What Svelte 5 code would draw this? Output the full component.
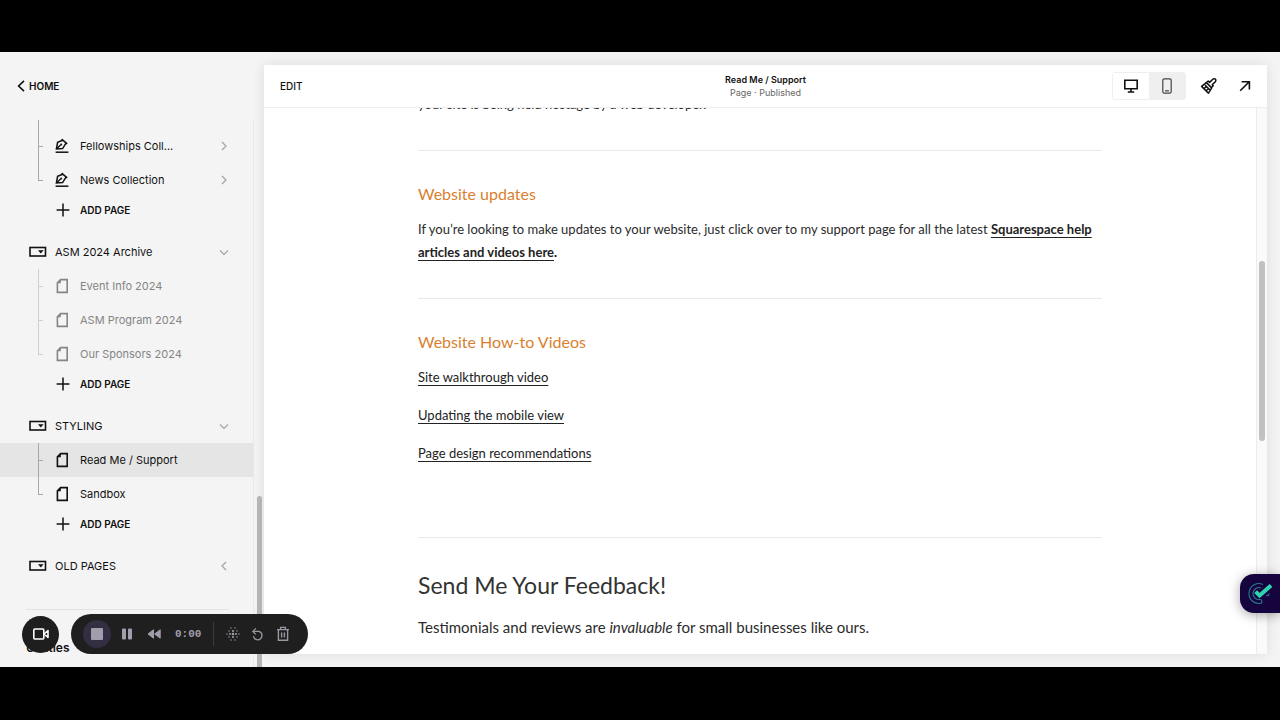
<script>
  let device = $state('desktop');
  let selected = $state('Read Me / Support');

  const groups = [
    {
      title: null,
      icon: 'pen',
      pages: ['Fellowships Coll...', 'News Collection']
    },
    {
      title: 'ASM 2024 Archive',
      icon: 'page',
      muted: true,
      pages: ['Event Info 2024', 'ASM Program 2024', 'Our Sponsors 2024']
    },
    {
      title: 'STYLING',
      icon: 'page',
      pages: ['Read Me / Support', 'Sandbox']
    }
  ];

  const videos = ['Site walkthrough video', 'Updating the mobile view', 'Page design recommendations'];

  // dot grid for the effects icon: [x, y, r]
  const dots = [
    [5, 1, 0.7], [9, 1, 0.7],
    [3, 4, 0.7], [7, 4, 1.1], [11, 4, 0.7],
    [1, 7, 0.7], [4, 7, 1], [7, 7, 1.3], [10, 7, 1], [13, 7, 0.7],
    [3, 10, 0.7], [7, 10, 1.1], [11, 10, 0.7],
    [5, 13, 0.7], [9, 13, 0.7]
  ];
</script>

{#snippet folderIcon()}
  <svg class="folder-icon" width="18" height="12" viewBox="0 0 18 12" aria-hidden="true">
    <rect x="1" y="1.5" width="15.5" height="8.5" fill="none" stroke="#111" stroke-width="1.6" />
    <path d="M9 4.3h5.6L11.8 7.6z" fill="#111" />
  </svg>
{/snippet}

{#snippet chevron(dir)}
  <svg class="chevron" width="12" height="12" viewBox="0 0 12 12" fill="none" stroke="#a3a3a3" stroke-width="1.2" aria-hidden="true">
    {#if dir === 'right'}
      <path d="M4 2l4 4-4 4" />
    {:else if dir === 'down'}
      <path d="M2 4.5l4 4 4-4" />
    {:else}
      <path d="M8 2L4 6l4 4" />
    {/if}
  </svg>
{/snippet}

<div class="stage">
  <div class="workspace">
    <aside class="sidebar">
      <a class="home" href="#home">
        <svg width="8" height="12" viewBox="0 0 8 12" fill="none" stroke="#111" stroke-width="1.6" aria-hidden="true">
          <path d="M7 .8L1.6 6 7 11.2" />
        </svg>
        HOME
      </a>

      <nav class="pages">
        {#each groups as group}
          {#if group.title}
            <button class="section">
              {@render folderIcon()}
              <span>{group.title}</span>
              {@render chevron('down')}
            </button>
          {/if}
          <ul class:light={group.muted} class:continued={!group.title}>
            {#each group.pages as page}
              <li>
                <button class="row" class:active={selected === page} onclick={() => (selected = page)}>
                  {#if group.icon === 'pen'}
                    <svg width="14" height="16" viewBox="0 0 14 16" fill="none" stroke="#111" stroke-width="1.5" aria-hidden="true">
                      <path d="M6.6 1.2l5.6 4.6M7.6 2.2L2.6 4.4 1.4 11 7.6 10.6 11 5.2" />
                      <path d="M1.6 10.8l4-3.8" />
                      <circle cx="6.2" cy="6.4" r="1" fill="#111" stroke="none" />
                      <path d="M.6 14.2h12.8" />
                    </svg>
                  {:else}
                    <svg width="14" height="16" viewBox="0 0 14 16" fill="none" stroke="currentColor" stroke-width="1.6" aria-hidden="true">
                      <path d="M5.6 1.6h6.6v12.8H2.4V4.9z" />
                      <path d="M5.8 1.6v3.6H2.4z" fill="currentColor" stroke="none" />
                    </svg>
                  {/if}
                  <span>{page}</span>
                  {#if group.icon === 'pen'}{@render chevron('right')}{/if}
                </button>
              </li>
            {/each}
          </ul>
          <button class="add">
            <svg width="14" height="14" viewBox="0 0 14 14" stroke="#111" stroke-width="1.5" aria-hidden="true">
              <path d="M7 .6v12.8M.6 7h12.8" />
            </svg>
            ADD PAGE
          </button>
        {/each}
        <button class="section">
          {@render folderIcon()}
          <span>OLD PAGES</span>
          {@render chevron('left')}
        </button>
        <h2 class="utilities">Utilities</h2>
      </nav>
      <div class="side-thumb"></div>
    </aside>

    <main class="preview">
      <header class="toolbar">
        <button class="edit">EDIT</button>
        <div class="title">
          <strong>Read Me / Support</strong>
          <span>Page · Published</span>
        </div>
        <div class="tools">
          <div class="devices">
            <button class:on={device === 'desktop'} aria-label="Desktop view" onclick={() => (device = 'desktop')}>
              <svg width="16" height="16" viewBox="0 0 16 16" fill="none" stroke="#111" stroke-width="1.6" aria-hidden="true">
                <path d="M1.8 2.3h12.4v8.4H1.8zM8 10.7V14M4.8 14h6.4" />
              </svg>
            </button>
            <button class:on={device === 'mobile'} aria-label="Mobile view" onclick={() => (device = 'mobile')}>
              <svg width="16" height="16" viewBox="0 0 16 16" fill="none" stroke="#444" stroke-width="1.2" aria-hidden="true">
                <rect x="3.8" y=".8" width="8.4" height="14.4" rx="1.5" />
                <path d="M6 12.8h4" />
              </svg>
            </button>
          </div>
          <button class="tool" aria-label="Site styles">
            <svg width="18" height="18" viewBox="0 0 18 18" fill="none" stroke="#111" stroke-width="1.5" stroke-linejoin="round" aria-hidden="true">
              <path d="M9.6 5.4l3.2-3.2a1.7 1.7 0 0 1 2.6 2.4l-3.2 3.2 1 1-1.8 1.8-5-5 1.8-1.6z" />
              <path d="M6.4 5.6L1.6 9.4l6.8 6.8 3.4-5.4" />
              <path d="M3.8 11.6l2.6-2M6 13.8l2.6-2.2M5 8l5 5" />
            </svg>
          </button>
          <button class="tool" aria-label="Open site">
            <svg width="12" height="12" viewBox="0 0 12 12" fill="none" stroke="#111" stroke-width="1.6" aria-hidden="true">
              <path d="M1.2 10.8l9-9M2.6 1.8h7.8v7.6" />
            </svg>
          </button>
        </div>
      </header>

      <div class="page-view">
        <article>
          <p>your site is being held hostage by a web developer.</p>
          <hr />
          <h3>Website updates</h3>
          <p>
            If you’re looking to make updates to your website, just click over to my support page for all the latest
            <b><a href="#help">Squarespace help articles and videos here</a>.</b>
          </p>
          <hr />
          <h3>Website How-to Videos</h3>
          <ul class="videos">
            {#each videos as video}
              <li><a href="#video">{video}</a></li>
            {/each}
          </ul>
          <hr />
          <h2>Send Me Your Feedback!</h2>
          <p class="large">Testimonials and reviews are <em>invaluable</em> for small businesses like ours.</p>
        </article>
        <div class="scroll-track"><div class="page-thumb"></div></div>
      </div>
    </main>

    <div class="recorder">
      <button class="camera" aria-label="Camera">
        <svg width="18" height="14" viewBox="0 0 18 14" fill="none" stroke="#fff" stroke-width="1.6" stroke-linejoin="round" aria-hidden="true">
          <rect x="1.8" y="2" width="10" height="10" rx="1" />
          <path d="M12 7l4-3.4v6.8z" />
        </svg>
      </button>
      <div class="controls">
        <div class="playback">
          <button class="stop" aria-label="Stop"><i></i></button>
          <button aria-label="Pause">
            <svg width="12" height="12" viewBox="0 0 12 12" fill="#a29dac" aria-hidden="true">
              <rect x="1" y=".5" width="4" height="11" rx="1" />
              <rect x="7" y=".5" width="4" height="11" rx="1" />
            </svg>
          </button>
          <button aria-label="Rewind">
            <svg width="14" height="10" viewBox="0 0 14 10" fill="#a29dac" stroke="#a29dac" stroke-linejoin="round" aria-hidden="true">
              <path d="M6.5.8v8.4L1 5zM13.2.8v8.4L7.6 5z" />
            </svg>
          </button>
          <time>0:00</time>
        </div>
        <span class="divider"></span>
        <div class="extras">
          <button aria-label="Effects">
            <svg width="14" height="14" viewBox="0 0 14 14" fill="#a29dac" aria-hidden="true">
              {#each dots as [x, y, r]}
                <circle cx={x} cy={y} {r} />
              {/each}
            </svg>
          </button>
          <button aria-label="Restart">
            <svg width="14" height="14" viewBox="0 0 14 14" fill="none" stroke="#9a96a2" stroke-width="1.3" aria-hidden="true">
              <path d="M2.4 4.4H8a4.3 4.3 0 1 1-5.6 4.8" />
              <path d="M4.8 1.4l-3 3 3 3" />
            </svg>
          </button>
          <button aria-label="Delete">
            <svg width="14" height="16" viewBox="0 0 14 16" fill="none" stroke="#9a96a2" stroke-width="1.4" aria-hidden="true">
              <path d="M1 3.6h12M4.6 3.4V1.4h4.8v2M2.4 3.8v10.4h9.2V3.8M5.6 6.6v4.8M8.4 6.6v4.8" />
            </svg>
          </button>
        </div>
      </div>
    </div>

    <button class="assistant" aria-label="Assistant">
      <svg width="28" height="26" viewBox="0 0 28 26" fill="none" aria-hidden="true">
        <path d="M17 3.4A10 10 0 1 0 14 22.5a2 2 0 0 0-.3-4A6 6 0 1 1 15 6.9" stroke="#2a7890" stroke-width="1.1" />
        <path d="M20 14.5a2 2 0 0 0 3-2" stroke="#2a7890" stroke-width="1.1" />
        <path d="M9.6 10.6l4 4L25 4.4" stroke="#2fd3b0" stroke-width="4" />
      </svg>
    </button>
  </div>
</div>

<style>
  :global(body) {
    margin: 0;
    background: #000;
  }

  .stage {
    box-sizing: border-box;
    height: 100vh;
    padding: 52px 0 53px;
    background: #000;
    font-family: Inter, 'Liberation Sans', sans-serif;
    color: #111;
  }

  .workspace {
    position: relative;
    display: flex;
    height: 100%;
    overflow: hidden;
    background: #f4f4f4;
  }

  button {
    font: inherit;
    color: inherit;
    background: none;
    border: 0;
    padding: 0;
    cursor: pointer;
  }

  svg {
    flex: none;
    display: block;
  }

  ul {
    list-style: none;
    margin: 0;
    padding: 0;
  }

  /* Sidebar */
  .sidebar {
    position: relative;
    flex: none;
    display: flex;
    flex-direction: column;
    width: 264px;
  }

  .home {
    display: flex;
    align-items: center;
    gap: 4px;
    height: 68px;
    padding-left: 17px;
    font-size: 10px;
    font-weight: 600;
    color: inherit;
    text-decoration: none;
  }

  .pages {
    flex: 1;
    min-height: 0;
    overflow: hidden;
    margin-right: 10px;
    border-right: 1px solid #e9e9e9;
    font-size: 11px;
  }

  .section {
    display: flex;
    align-items: center;
    gap: 8px;
    width: 100%;
    height: 34px;
    margin-top: 12px;
    padding: 0 23px 0 29px;
    text-align: left;
  }

  .section span,
  .row span {
    flex: 1;
  }

  .row {
    display: flex;
    align-items: center;
    gap: 11px;
    width: 100%;
    height: 34px;
    padding: 0 23px 0 55px;
    text-align: left;
  }

  .row.active {
    background: #e5e5e5;
  }

  .continued {
    padding-top: 9px;
    background: linear-gradient(#a8a8a8, #a8a8a8) 38px 0 / 1px 9px no-repeat;
  }

  li {
    position: relative;
  }

  /* branch lines joining the pages of a folder */
  .pages li::before,
  .pages li::after {
    content: '';
    position: absolute;
    left: 38px;
    top: 0;
    width: 1px;
    height: 100%;
    background: #a8a8a8;
  }

  .pages li::after {
    top: 17px;
    width: 5px;
    height: 1px;
  }

  .pages li:last-child::before {
    height: 17px;
  }

  .light {
    color: #858585;
  }

  .pages .light li::before,
  .pages .light li::after {
    background: #cfcfcf;
  }

  .add {
    display: flex;
    align-items: center;
    gap: 10px;
    height: 26px;
    padding-left: 56px;
    font-size: 10px;
    font-weight: 600;
  }

  .utilities {
    margin: 26px 24px 0 26px;
    padding-top: 30px;
    border-top: 1px solid #e2e2e2;
    font-size: 12px;
    line-height: 16px;
    font-weight: 600;
  }

  .side-thumb {
    position: absolute;
    right: 2px;
    bottom: 0;
    width: 5px;
    height: 171px;
    border-radius: 3px 3px 0 0;
    background: #b5b5b5;
  }

  /* Preview panel */
  .preview {
    flex: 1;
    min-width: 0;
    display: flex;
    flex-direction: column;
    margin: 13px 13px 13px 0;
    background: #fff;
    box-shadow: 0 0 12px rgba(0, 0, 0, 0.1);
  }

  .toolbar {
    flex: none;
    display: grid;
    grid-template-columns: 1fr auto 1fr;
    align-items: center;
    height: 42px;
    padding: 0 16px;
    border-bottom: 1px solid #efefef;
    font-size: 10px;
  }

  .edit {
    justify-self: start;
    font-weight: 500;
  }

  .title {
    display: flex;
    flex-direction: column;
    align-items: center;
    font-size: 9px;
    line-height: 13px;
  }

  .title strong {
    font-weight: 600;
  }

  .title span {
    color: #666;
  }

  .tools {
    justify-self: end;
    display: flex;
    align-items: center;
    gap: 14px;
  }

  .devices {
    display: flex;
    border: 1px solid #efefef;
    border-radius: 3px;
    background: #efefef;
  }

  .devices button {
    display: grid;
    place-items: center;
    width: 36px;
    height: 26px;
  }

  .devices .on {
    background: #fff;
  }

  .tool {
    display: grid;
    place-items: center;
    min-width: 12px;
  }

  .tool + .tool {
    margin: 0 0 0 7px;
  }

  .page-view {
    flex: 1;
    min-height: 0;
    display: flex;
    overflow: hidden;
    font-family: Lato, 'Open Sans', sans-serif;
    color: #2b2b2b;
  }

  /* the page is scrolled part of the way down its first line */
  article {
    flex: 1;
    max-width: 684px;
    margin: -15px auto 0;
    font-size: 13px;
    line-height: 23px;
  }

  article p {
    margin: 0;
  }

  article a {
    color: #222;
    text-decoration: underline;
    text-underline-offset: 3px;
  }

  article b {
    color: #111;
  }

  hr {
    height: 1px;
    margin: 34px 0 31px;
    border: 0;
    background: #e9e9e9;
  }

  h3 {
    margin: 0 0 12px;
    font-size: 16px;
    line-height: 24px;
    font-weight: 400;
    color: #d97f2f;
  }

  .videos {
    display: flex;
    flex-direction: column;
    gap: 15px;
    margin-bottom: 72px;
  }

  article h2 {
    margin: 0 0 14px;
    font-size: 23px;
    line-height: 32px;
    font-weight: 400;
    color: #333;
  }

  article .large {
    font-size: 15px;
    line-height: 24px;
  }

  .scroll-track {
    position: relative;
    width: 10px;
    border-left: 1px solid #ececec;
    background: #fafafa;
  }

  .page-thumb {
    position: absolute;
    top: 28%;
    left: 2px;
    width: 6px;
    height: 33%;
    border-radius: 3px;
    background: #c1c1c1;
  }

  /* Floating widgets */
  .recorder {
    position: absolute;
    left: 22px;
    bottom: 13px;
    display: flex;
    align-items: center;
    gap: 12px;
  }

  .camera {
    display: grid;
    place-items: center;
    width: 37px;
    height: 37px;
    border-radius: 50%;
    background: #1e1e1e;
  }

  .controls {
    display: flex;
    align-items: center;
    gap: 12px;
    height: 40px;
    padding: 0 18px 0 12px;
    border-radius: 20px;
    background: #1f1f1f;
    color: #a29dac;
  }

  .playback {
    display: flex;
    align-items: center;
    gap: 14px;
  }

  .extras {
    display: flex;
    align-items: center;
    gap: 11px;
  }

  .stop {
    display: grid;
    place-items: center;
    width: 28px;
    height: 28px;
    margin-right: -4px;
    border-radius: 50%;
    background: #332e42;
  }

  .stop i {
    width: 12px;
    height: 12px;
    border-radius: 1px;
    background: #a29dac;
  }

  time {
    font: bold 11px 'Liberation Mono', monospace;
  }

  .divider {
    width: 1px;
    height: 24px;
    background: #3a3a3a;
  }

  .assistant {
    position: absolute;
    right: 0;
    bottom: 54px;
    display: grid;
    place-items: center;
    width: 40px;
    height: 39px;
    border-radius: 14px 0 0 14px;
    background: #16043f;
    box-shadow: 0 2px 12px rgba(0, 0, 0, 0.35);
  }
</style>
